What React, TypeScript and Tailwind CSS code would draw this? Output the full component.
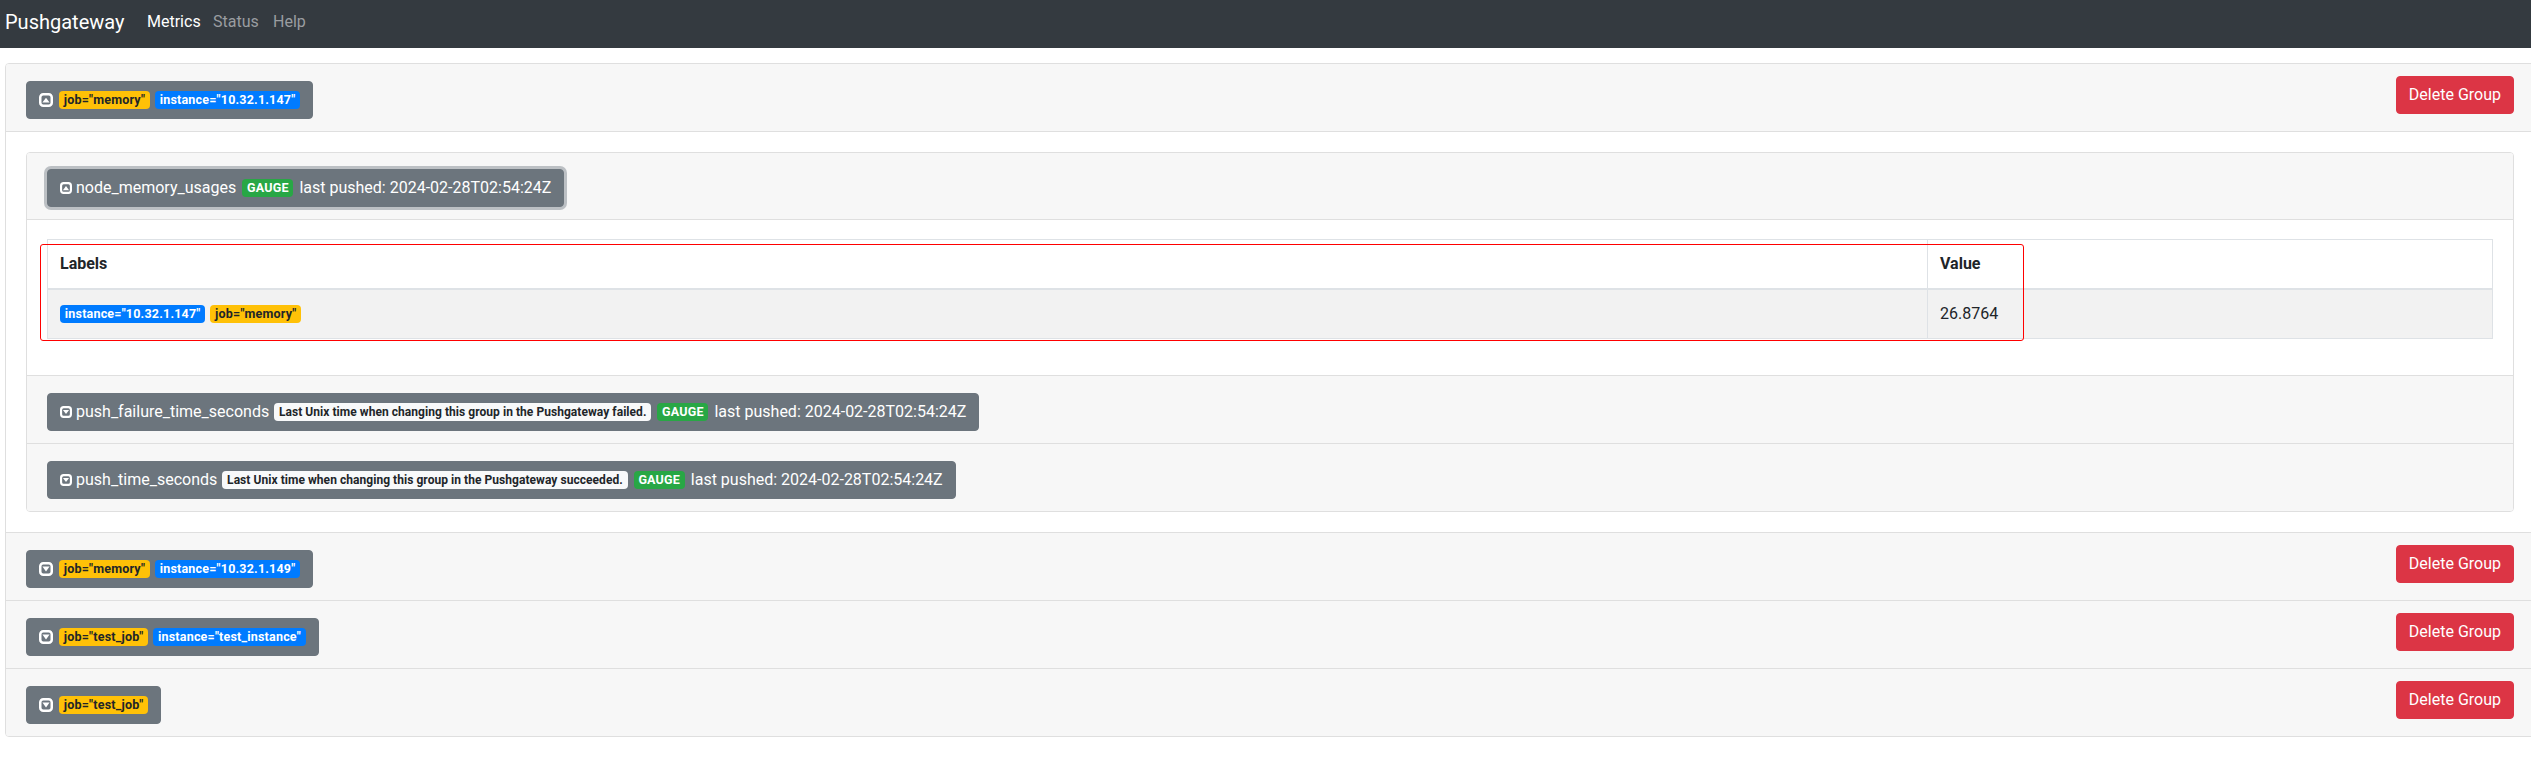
import React from "react";

type BadgeKind = "warning" | "primary" | "success" | "light";

const badgeCls: Record<BadgeKind, string> = {
  warning: "bg-[#ffc107] text-[#212529] text-[12.5px] tracking-[0.2px]",
  primary: "bg-[#007bff] text-white text-[12.5px] tracking-[0.2px]",
  success: "bg-[#28a745] text-white text-[12.5px] tracking-[0.2px]",
  light: "bg-[#f8f9fa] text-[#212529] text-[12px] tracking-[0.05px]",
};

function Badge({ kind, children, className = "" }: { kind: BadgeKind; children: React.ReactNode; className?: string }) {
  return (
    <span
      className={`inline-flex items-center h-[18px] px-[4.8px] rounded-[4px] font-bold leading-none whitespace-nowrap ${badgeCls[kind]} ${className}`}
    >
      {children}
    </span>
  );
}

function ToggleIcon({ up, size }: { up: boolean; size: number }) {
  return (
    <svg width={size} height={size} viewBox="0 0 14 14" className="shrink-0">
      <rect x="1.25" y="1.25" width="11.5" height="11.5" rx="3" fill="none" stroke="white" strokeWidth="2.5" />
      {up ? (
        <polygon points="3.4,9.6 10.6,9.6 7,4.8" fill="white" />
      ) : (
        <polygon points="3.4,4.6 10.6,4.6 7,9.4" fill="white" />
      )}
    </svg>
  );
}

function GroupHeader({
  up,
  labels,
  border,
}: {
  up: boolean;
  labels: { kind: BadgeKind; text: string }[];
  border?: boolean;
}) {
  return (
    <div className={`flex justify-between items-start px-[20px] py-[12px] bg-[#f7f7f7] ${border ? "border-t border-[#dfdfdf]" : ""}`}>
      <div className="pt-[5px]">
        <button className="inline-flex items-center h-[38px] px-[12px] border border-[#6c757d] bg-[#6c757d] rounded-[4px] text-white text-[16px] leading-[24px]">
          <ToggleIcon up={up} size={14} />
          <span className="ml-[6px] flex items-center gap-[5px]">
            {labels.map((l, i) => (
              <Badge key={i} kind={l.kind}>
                {l.text}
              </Badge>
            ))}
          </span>
        </button>
      </div>
      <button className="h-[38px] px-[12px] rounded-[4px] bg-[#dc3545] border border-[#dc3545] text-white text-[16px] leading-[24px]">
        Delete Group
      </button>
    </div>
  );
}

function MetricButton({
  name,
  help,
  up,
  focus,
}: {
  name: string;
  help?: string;
  up: boolean;
  focus?: boolean;
}) {
  return (
    <button
      className={`inline-flex items-center h-[38px] px-[12px] border border-[#6c757d] bg-[#6c757d] rounded-[4px] text-white text-[16px] leading-[24px] whitespace-nowrap ${
        focus ? "shadow-[0_0_0_3px_rgba(130,138,145,0.5)]" : ""
      }`}
    >
      <ToggleIcon up={up} size={12} />
      <span className="ml-[4px]">{name}</span>
      {help ? (
        <Badge kind="light" className="ml-[5px]">
          {help}
        </Badge>
      ) : null}
      <Badge kind="success" className="ml-[6px]">
        GAUGE
      </Badge>
      <span className="ml-[6px]">last pushed: 2024-02-28T02:54:24Z</span>
    </button>
  );
}

export default function App() {
  return (
    <div className="w-[2531px] h-[758px] overflow-hidden bg-white text-[#212529] font-['Roboto','Liberation_Sans',sans-serif]">
      {/* Navbar */}
      <nav className="h-[48px] bg-[#343a40] flex items-center pl-[5px] pb-[4px]">
        <span className="w-[142px] text-[20px] leading-[30px] text-white">Pushgateway</span>
        <span className="w-[66px] text-[16px] leading-[24px] text-white">Metrics</span>
        <span className="w-[60px] text-[16px] leading-[24px] text-[#9a9da0]">Status</span>
        <span className="text-[16px] leading-[24px] text-[#9a9da0]">Help</span>
      </nav>

      {/* Accordion */}
      <div className="mt-[15px] ml-[5px] w-[2530px] border border-[#dfdfdf] rounded-[4px] overflow-hidden">
        {/* Group 1 */}
        <div>
          <GroupHeader
            up
            labels={[
              { kind: "warning", text: 'job="memory"' },
              { kind: "primary", text: 'instance="10.32.1.147"' },
            ]}
          />
          <div className="border-t border-[#dfdfdf] bg-white p-[20px]">
            <div className="border border-[#dfdfdf] rounded-[4px] overflow-hidden">
              {/* metric 1 */}
              <div className="bg-[#f7f7f7] px-[20px] pt-[12px] pb-[12px]">
                <div className="pt-[4px]">
                  <MetricButton name="node_memory_usages" up focus />
                </div>
              </div>
              <div className="border-t border-[#dfdfdf] bg-white px-[20px] pt-[19px] pb-[20px]">
                <div className="relative mb-[16px]">
                  <table className="w-full border-collapse text-[16px] leading-[24px]">
                    <thead>
                      <tr>
                        <th className="w-[1880px] border border-b-2 border-[#dee2e6] p-[12px] text-left font-bold">
                          Labels
                        </th>
                        <th className="border border-b-2 border-[#dee2e6] p-[12px] text-left font-bold">Value</th>
                      </tr>
                    </thead>
                    <tbody>
                      <tr className="bg-[#f2f2f2]">
                        <td className="border border-[#dee2e6] p-[12px]">
                          <div className="flex items-center h-[24px] gap-[5px]">
                            <Badge kind="primary">instance="10.32.1.147"</Badge>
                            <Badge kind="warning">job="memory"</Badge>
                          </div>
                        </td>
                        <td className="border border-[#dee2e6] p-[12px]">26.8764</td>
                      </tr>
                    </tbody>
                  </table>
                  <div className="absolute left-[-7px] top-[5px] w-[1984px] h-[97px] border border-[#ff0000] rounded-[3px] pointer-events-none" />
                </div>
              </div>
              {/* metric 2 */}
              <div className="border-t border-[#dfdfdf] bg-[#f7f7f7] px-[20px] py-[12px]">
                <div className="pt-[5px]">
                  <MetricButton
                    name="push_failure_time_seconds"
                    help="Last Unix time when changing this group in the Pushgateway failed."
                    up={false}
                  />
                </div>
              </div>
              {/* metric 3 */}
              <div className="border-t border-[#dfdfdf] bg-[#f7f7f7] px-[20px] py-[12px]">
                <div className="pt-[5px]">
                  <MetricButton
                    name="push_time_seconds"
                    help="Last Unix time when changing this group in the Pushgateway succeeded."
                    up={false}
                  />
                </div>
              </div>
            </div>
          </div>
        </div>

        {/* Group 2 */}
        <GroupHeader
          border
          up={false}
          labels={[
            { kind: "warning", text: 'job="memory"' },
            { kind: "primary", text: 'instance="10.32.1.149"' },
          ]}
        />
        {/* Group 3 */}
        <GroupHeader
          border
          up={false}
          labels={[
            { kind: "warning", text: 'job="test_job"' },
            { kind: "primary", text: 'instance="test_instance"' },
          ]}
        />
        {/* Group 4 */}
        <GroupHeader border up={false} labels={[{ kind: "warning", text: 'job="test_job"' }]} />
      </div>
    </div>
  );
}
